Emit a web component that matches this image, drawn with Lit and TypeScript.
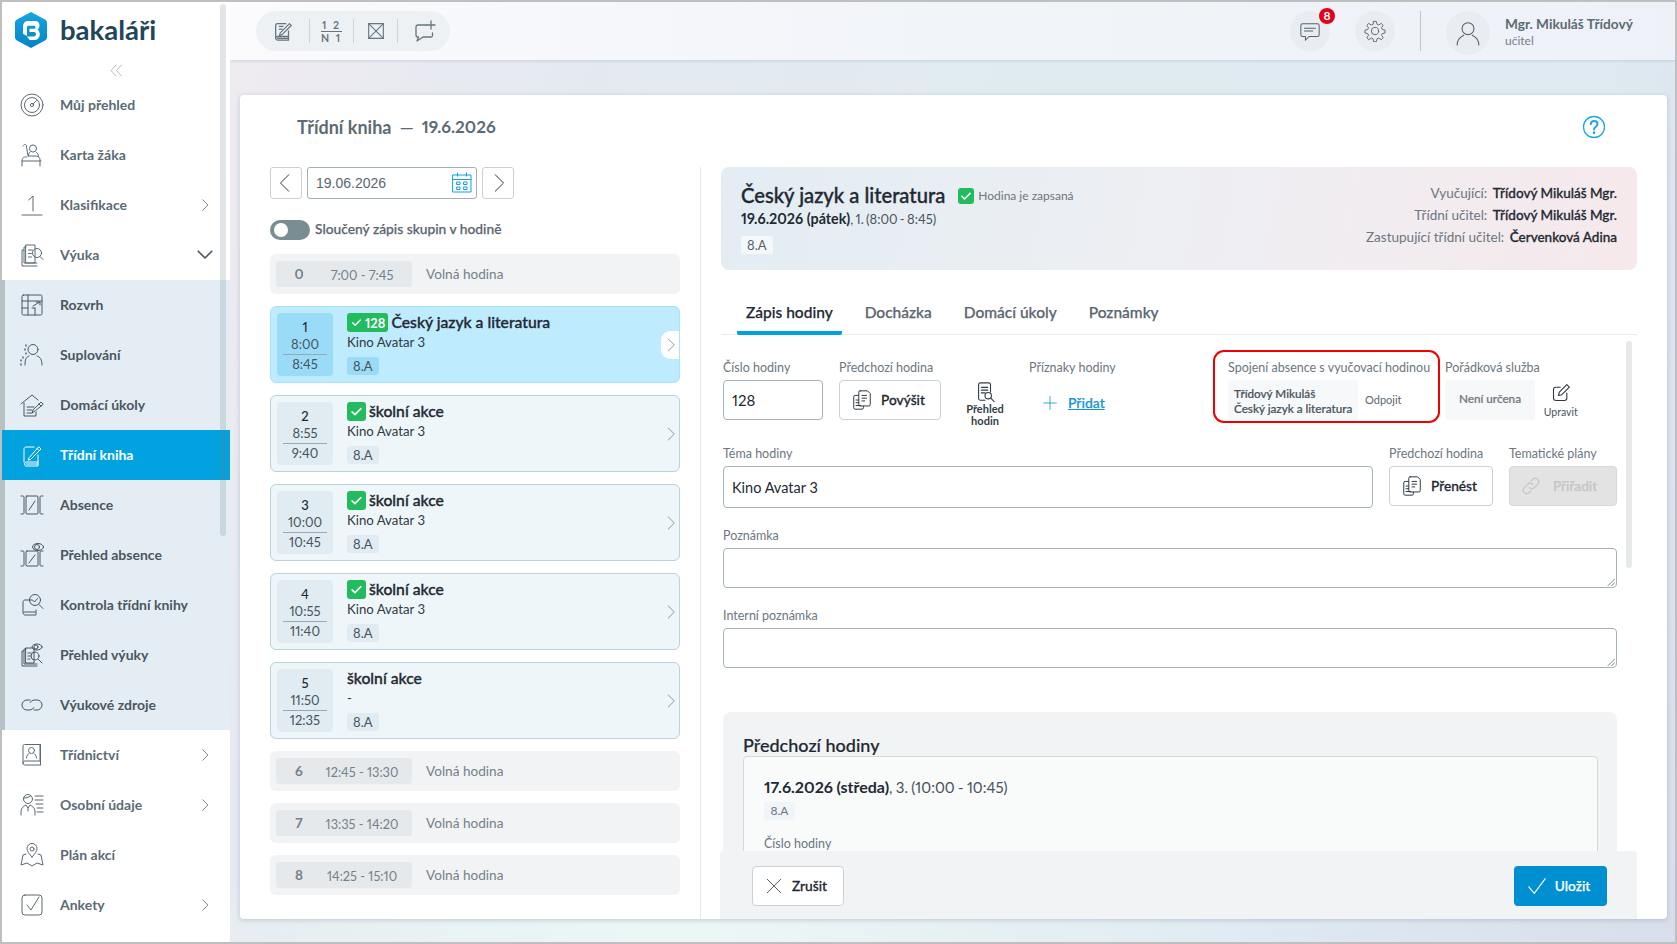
import { LitElement, html, css, svg, nothing } from 'lit';
import { customElement } from 'lit/decorators.js';

const icon = (size: number, body: unknown, sw = 1) => html`<svg
  width=${size} height=${size} viewBox="0 0 24 24" fill="none" stroke="currentColor"
  stroke-width=${sw} stroke-linecap="round" stroke-linejoin="round">${body}</svg>`;

const ICONS: Record<string, unknown> = {
  target: svg`<circle cx="12" cy="12" r="11"/><circle cx="12" cy="12" r="7.5"/><circle cx="12" cy="12" r="1.6"/><path d="M13 11l3.5-3.5"/>`,
  seat: svg`<circle cx="13" cy="5.5" r="3.6"/><path d="M3 3c1-2 3-2 3.4 0l1.6 10h8c3 0 4 2 4 4v6M7 14c-2-.6-5 0-5 4v5M2 18h19M9.500 9.500c-1 1-1 2-1 3.500M16.500 9.500c1.500 1 2 2.500 2 4"/>`,
  one: svg`<path d="M2 22h20M8.500 7l4.500-4v15"/>`,
  book: svg`<path d="M4 7h-2v16h15M6 4h-2v16h13"/><path d="M6 2h9v18H6zM8.500 7h4M8.500 10.500h3M8.500 14h3"/><circle cx="17" cy="10" r="4.500"/><path d="M20 13.500l3 3"/>`,
  grid: svg`<rect x="2" y="2" width="20" height="20" rx="1.500"/><path d="M2 8h20M8 2v20M2 15h6M15 15v7M15 15h-3M13 13l7-4M16 9h4v3"/>`,
  sub: svg`<circle cx="13" cy="6.500" r="5"/><path d="M9 13c-3 1-4 3-4 9M17 13c3 1 5 3 5 9" /><path d="M6 2v1M5 6v1M6 10v1M3 14v1M1 17v1M1 21v1" stroke-width="1.300"/>`,
  home: svg`<path d="M1 11L12 2l6 5M4 10v13h12v-4M7 14h7M7 17h5M7 20h5"/><path d="M15 18l-3 2 1-3 8-8 2 2zM19 11l2 2"/>`,
  bookpen: svg`<path d="M4 19V6c0-1 1-2 2-2h8M18 12v11H6c-2 0-2-4 0-4h12M6 21h12"/><path d="M9 15l-1 2 2.500-.5L21 6l-2-2zM17 5.500l2 2"/>`,
  absence: svg`<rect x="6" y="3" width="12" height="18" rx="1"/><path d="M9 17l6-9M1 3h2c1 0 1 1 1 2v14c0 1 0 2-1 2H1M23 3h-2c-1 0-1 1-1 2v14c0 1 0 2 1 2h2"/>`,
  absenceeye: svg`<rect x="6" y="8" width="12" height="15" rx="1"/><path d="M9 20l6-8M1 8h2c1 0 1 1 1 2v11c0 1 0 2-1 2H1M23 8h-2c-1 0-1 1-1 2v11c0 1 0 2 1 2h2"/><ellipse cx="18" cy="4" rx="5.500" ry="3.500"/><circle cx="17" cy="4" r="2.500"/>`,
  bookcheck: svg`<path d="M3 20V9c0-1 1-2 2-2h7M16 17v5H5c-2 0-2-3 0-3h10"/><circle cx="15" cy="7" r="5.500"/><path d="M12.500 7l2 2 3-3.500M19 11.500l4 4"/>`,
  bookeye: svg`<path d="M4 8h-2v15h15M6 6h-2v15h13"/><path d="M6 5h8v15H6zM8 10h3M8 13h3M8 16h2"/><circle cx="15" cy="13" r="4"/><path d="M18 16l4 4"/><ellipse cx="17" cy="4" rx="5" ry="3"/><circle cx="16" cy="4" r="2"/>`,
  link: svg`<path d="M10 7H7a5 5 0 0 0 0 10h3a5 5 0 0 0 4-2.500M14 17h3a5 5 0 0 0 0-10h-3a5 5 0 0 0-4 2.500"/>`,
  classbook: svg`<path d="M3 21V3c0-1 .5-1.500 1.500-1.500H20V18H5c-2.500 0-2.500 4 0 4h15M20.500 1.500V22"/><circle cx="11.500" cy="7.500" r="3"/><path d="M6.500 15c0-3 2-4 2.500-4.500M16.500 15c0-3-2-4-2.500-4.500"/>`,
  person: svg`<circle cx="8" cy="6" r="4.500"/><path d="M3.500 5c2 0 5-.5 7-2M1 22v-4c0-3 3-5 5-6l2 3 2-3c2 1 5 3 5 6v4M8 15v3M15 3h8M15 7h8M16 11h7M17 15h6M17 19h6"/>`,
  pin: svg`<path d="M12 14c-3-3-5-6-5-8.500a5 5 0 0 1 10 0C17 8 15 11 12 14z"/><circle cx="12" cy="6" r="2"/><path d="M6 11l-3 1-2 10 6-2 5 3 5-3 6 2-2-10-3-1"/>`,
  check: svg`<rect x="2" y="2" width="20" height="20" rx="3"/><path d="M7 12l4 5 8-13"/>`,
};

type NavItem = { label: string; ic: string; chevron?: 'right' | 'down'; active?: boolean };

const NAV_TOP: NavItem[] = [
  { label: 'Můj přehled', ic: 'target' },
  { label: 'Karta žáka', ic: 'seat' },
  { label: 'Klasifikace', ic: 'one', chevron: 'right' },
  { label: 'Výuka', ic: 'book', chevron: 'down' },
];
const NAV_SUB: NavItem[] = [
  { label: 'Rozvrh', ic: 'grid' },
  { label: 'Suplování', ic: 'sub' },
  { label: 'Domácí úkoly', ic: 'home' },
  { label: 'Třídní kniha', ic: 'bookpen', active: true },
  { label: 'Absence', ic: 'absence' },
  { label: 'Přehled absence', ic: 'absenceeye' },
  { label: 'Kontrola třídní knihy', ic: 'bookcheck' },
  { label: 'Přehled výuky', ic: 'bookeye' },
  { label: 'Výukové zdroje', ic: 'link' },
];
const NAV_BOTTOM: NavItem[] = [
  { label: 'Třídnictví', ic: 'classbook', chevron: 'right' },
  { label: 'Osobní údaje', ic: 'person', chevron: 'right' },
  { label: 'Plán akcí', ic: 'pin' },
  { label: 'Ankety', ic: 'check', chevron: 'right' },
];

type Row =
  | { free: true; n: number; time: string }
  | { free?: false; n: number; from: string; to: string; title: string; sub: string; done: boolean; badge?: string; selected?: boolean };

const ROWS: Row[] = [
  { free: true, n: 0, time: '7:00 - 7:45' },
  { n: 1, from: '8:00', to: '8:45', title: 'Český jazyk a literatura', sub: 'Kino Avatar 3', done: true, badge: '128', selected: true },
  { n: 2, from: '8:55', to: '9:40', title: 'školní akce', sub: 'Kino Avatar 3', done: true },
  { n: 3, from: '10:00', to: '10:45', title: 'školní akce', sub: 'Kino Avatar 3', done: true },
  { n: 4, from: '10:55', to: '11:40', title: 'školní akce', sub: 'Kino Avatar 3', done: true },
  { n: 5, from: '11:50', to: '12:35', title: 'školní akce', sub: '-', done: false },
  { free: true, n: 6, time: '12:45 - 13:30' },
  { free: true, n: 7, time: '13:35 - 14:20' },
  { free: true, n: 8, time: '14:25 - 15:10' },
];

const tick = svg`<path d="M5 12.500l4.500 4.500L19 7.500" stroke-width="2.600"/>`;
const chevronRight = svg`<path d="M8 3l9 9-9 9"/>`;
const copyIcon = icon(22, svg`<path d="M10 2h8l3 3v12c0 1-.5 1.500-1.500 1.500H10c-1 0-1.500-.5-1.500-1.500V3.500C8.500 2.500 9 2 10 2zM12 7h5M12 10h5M12 13h3"/><path d="M8 7H4.500C3.500 7 3 7.500 3 8.500v12C3 21.500 3.500 22 4.500 22H12c1 0 1.500-.5 1.500-1.500V19M5.500 12H8M5.500 15H8M5.500 18h5"/>`);

@customElement('app-root')
export class AppRoot extends LitElement {
  static styles = css`
    :host {
      display: block;
      width: 1677px;
      height: 944px;
      box-sizing: border-box;
      border: 2px solid #bfbfbf;
      overflow: hidden;
      font-family: 'Lato', 'Noto Sans', sans-serif;
      font-size: 14px;
      line-height: 18px;
      font-variant-numeric: proportional-nums;
      color: #1f2933;
      background:
        radial-gradient(ellipse 620px 90px at 40% 100%, #eef7f6 0, rgba(238, 247, 246, 0) 100%),
        linear-gradient(112deg, #f6edf1 0%, #e4e9f1 30%, #dfebf1 55%, #dfe9f2 80%, #d8deeb 100%);
    }
    * { box-sizing: border-box; }
    svg { display: block; flex: none; }
    .shell { display: flex; height: 100%; }

    .sidebar { position: relative; width: 228px; flex: none; background: #fff; color: #5b6b75; }
    .logo-row { display: flex; align-items: center; height: 54px; padding: 2px 0 0 13px; gap: 13px; }
    .logo-text { font-size: 27.500px; line-height: 36px; font-weight: 700; color: #1f4659; }
    .collapse { display: flex; justify-content: center; height: 24px; padding-top: 8px; color: #77858e; }
    .nav-row { display: flex; align-items: center; height: 50px; padding-left: 18px; font-weight: 700; font-size: 14px; }
    .nav-row .label { margin-left: 16px; flex: 1; }
    .nav-row .chev { margin-right: 18px; }
    .nav-row .chev.down { margin-right: 16px; color: #4a5963; }
    .nav-group { background: #e3edf3; box-shadow: inset 3px 0 #b2c3c9; color: #4b5660; }
    .nav-row.active { background: #00a2e0; color: #fff; position: relative; }
    .side-scroll { position: absolute; left: 218px; top: 2px; width: 6px; height: 532px; border-radius: 3px; background: rgba(110, 130, 140, .2); }

    .content { flex: 1; min-width: 0; display: flex; flex-direction: column; }
    .topbar {
      display: flex; align-items: center; height: 58px; flex: none; padding-left: 26px;
      background: linear-gradient(90deg, #fbfbfd, #f1f4f9 50%, #eef2f8);
      box-shadow: 0 1px 3px rgba(90, 110, 130, .2);
    }
    .pill { display: flex; align-items: center; height: 40px; padding: 8px 0; border-radius: 20px; background: #eef1f4; color: #66757f; }
    .pill-cell { display: flex; align-items: center; justify-content: center; height: 24px; width: 44px; border-left: 1px solid #cdd3d7; }
    .pill-cell:first-child { border-left: 0; width: 53px; }
    .pill-cell:last-child { width: 53px; }
    .frac { font-size: 10.500px; line-height: 10px; font-weight: 700; letter-spacing: 2px; text-align: center; }
    .frac div:first-child { border-bottom: 1px solid #66757f; padding-bottom: 1px; margin-bottom: 1px; }
    .spacer { flex: 1; }
    .round { position: relative; display: flex; align-items: center; justify-content: center; width: 40px; height: 40px; border-radius: 50%; background: #e9edf1; color: #55646e; margin-left: 25px; }
    .badge { position: absolute; right: -5px; top: -3px; width: 16px; height: 16px; border-radius: 50%; background: #e2001a; color: #fff; font-size: 12px; line-height: 16px; font-weight: 700; text-align: center; }
    .top-sep { width: 1px; height: 40px; background: #bcc6cc; margin-left: 25px; }
    .avatar { width: 44px; height: 44px; margin: 4px 0 0 25px; }
    .user { margin-left: 15px; width: 170px; color: #5b6b75; }
    .user-name { font-weight: 700; font-size: 13.700px; line-height: 18px; }
    .user-role { font-size: 12px; line-height: 14px; color: #748089; margin-top: 1px; }

    .card {
      flex: 1; min-height: 0; margin: 35px 8px 23px 10px; border-radius: 4px; background: #fff;
      box-shadow: 0 1px 5px rgba(90, 110, 140, .3); display: flex; flex-direction: column; overflow: hidden;
    }
    .card-head { display: flex; align-items: center; height: 72px; flex: none; padding: 0 61px 8px 57px; color: #5b6b75; font-size: 18px; font-weight: 700; gap: 6px; }
    .card-head .help { margin-left: auto; color: #1ea5e4; }
    .card-date { font-size: 17px; }
    .dash { font-weight: 400; padding: 0 2px; }
    .card-body { flex: 1; min-height: 0; display: flex; }

    .left { width: 460px; flex: none; padding: 0 20px 0 30px; }
    .date-row { display: flex; gap: 5px; height: 32px; }
    .icon-btn { display: flex; align-items: center; justify-content: center; width: 32px; border: 1px solid #c8d2d6; border-radius: 3px; color: #1f2933; }
    .date-input { display: flex; align-items: center; justify-content: space-between; width: 170px; padding: 0 2px 0 8px; border: 1px solid #9fb0b7; border-radius: 3px; font-family: 'Liberation Sans', sans-serif; font-size: 14px; color: #5a6670; }
    .date-input svg { color: #10a0dc; }
    .toggle-row { display: flex; align-items: center; gap: 5px; margin: 21px 0 14px; height: 20px; font-size: 13.800px; font-weight: 500; color: #5b6670; -webkit-text-stroke: .25px #5b6670; }
    .toggle-row span { margin-top: -2px; }
    .toggle { width: 40px; height: 20px; border-radius: 10px; background: #7a8d93; padding: 3px 0 0 4px; flex: none; }
    .toggle i { display: block; width: 14px; height: 14px; border-radius: 50%; background: #fff; }

    .list { display: flex; flex-direction: column; gap: 12px; }
    .free { display: flex; align-items: center; height: 40px; padding-left: 6px; border-radius: 6px; background: #f1f3f4; color: #75818a; font-size: 13.600px; }
    .free-badge { display: flex; align-items: center; width: 136px; height: 26px; border-radius: 3px; background: #e6e9eb; }
    .free-badge .n { width: 46px; text-align: center; font-weight: 700; }
    .free-badge .t { width: 80px; padding-top: 1px; text-align: center; white-space: nowrap; font-size: 12.800px; }
    .free .name { margin-left: 14px; }
    .lesson { position: relative; display: flex; height: 77px; padding: 6px; border: 1px solid #b8d2de; border-radius: 6px; background: #eff6fa; }
    .lesson.sel { border-color: #a5e2fb; background: #bfebff; }
    .time { width: 56px; height: 63px; flex: none; border-radius: 4px; background: #e0ecf2; text-align: center; color: #47535c; padding-top: 4px; font-size: 13px; }
    .sel .time { background: #9adcf8; }
    .time .num { color: #1f2933; height: 18px; line-height: 20px; font-weight: 500; }
    .time .div { height: 1px; width: 44px; margin: 0 auto; background: #9aa7ae; }
    .time .tx { height: 18px; line-height: 18px; }
    .time .tx:nth-child(2) { height: 19px; line-height: 19px; }
    .lesson-main { margin-left: 14px; flex: 1; min-width: 0; margin-top: -1px; }
    .lesson-title { display: flex; align-items: center; gap: 3px; height: 19px; font-size: 15.700px; font-weight: 500; color: #1f2933; -webkit-text-stroke: .35px #1f2933; }
    .ok { display: flex; align-items: center; justify-content: center; height: 19px; min-width: 19px; border-radius: 3px; background: #22bb5e; color: #fff; gap: 1px; padding: 0 2px; flex: none; margin-top: 2px; }
    .ok.wide { padding: 0 3px; gap: 2px; }
    .ok b { font-size: 13px; line-height: 16px; -webkit-text-stroke: 0; }
    .lesson-sub { height: 20px; line-height: 20px; margin-top: 1px; font-size: 13.200px; color: #2f3a42; }
    .chip { display: inline-block; height: 18px; line-height: 18px; padding: 0 6px; border-radius: 3px; background: #e0ecf2; font-size: 13px; color: #47535c; margin-top: 5px; }
    .sel .chip { background: #9adcf8; }
    .lesson .go { position: absolute; right: 0; top: 24px; width: 18px; height: 28px; display: flex; align-items: center; justify-content: flex-end; color: #5b6670; border-radius: 9px 0 0 9px; }
    .sel .go { background: #fff; }

    .right { position: relative; flex: 1; min-width: 0; border-left: 1px solid #e6e8ea; padding: 0 30px 0 20px; overflow: hidden; }
    .header {
      display: flex; justify-content: space-between; align-items: flex-start; height: 103px; padding: 15px 20px 0;
      border-radius: 8px; background: linear-gradient(100deg, #e3edf3, #eeeff3 50%, #f6e9ec);
    }
    .h-title-row { display: flex; align-items: center; height: 26px; }
    .h-title { font-size: 20.200px; font-weight: 500; -webkit-text-stroke: .35px #1f2933; color: #1f2933; }
    .h-ok { width: 16px; height: 16px; min-width: 16px; padding: 0; margin: 1px 4px 0 13px; }
    .h-state { font-size: 12px; color: #6c7680; margin-top: 1px; }
    .h-date { line-height: 20px; font-size: 13px; color: #47535c; margin-top: 1px; word-spacing: -1px; }
    .h-date b { color: #1f2933; font-size: 14.300px; word-spacing: 0; }
    .h-chip { display: inline-block; height: 18px; line-height: 18px; padding: 0 6px; margin-top: 7px; border-radius: 3px; background: #f5f8fa; font-size: 13px; color: #55616a; }
    .h-right { text-align: right; line-height: 22px; font-size: 13.500px; color: #6c7680; }
    .h-right b { font-weight: 500; color: #1f2933; -webkit-text-stroke: .3px #1f2933; margin-left: 2px; }

    .tabs { display: flex; gap: 14px; height: 45px; margin-top: 20px; padding-left: 16px; border-bottom: 1px solid #e8eaec; font-size: 15.500px; font-weight: 500; color: #5b6670; -webkit-text-stroke: .25px #5b6670; }
    .tab { padding: 13px 9px 0; height: 45px; line-height: 18px; }
    .tab.on { color: #1f2933; -webkit-text-stroke: .25px #1f2933; border-bottom: 4px solid #00a2e0; border-radius: 0 0 2px 2px; }

    .form { padding: 0 20px 0 2px; }
    .row1 { display: flex; align-items: flex-start; margin-top: 15px; }
    .field { padding-top: 9px; flex: none; }
    .lab { height: 18px; line-height: 18px; margin-bottom: 3px; font-size: 12.500px; color: #6c7680; white-space: nowrap; }
    .inp { display: flex; align-items: center; height: 40px; padding: 0 8px; border: 1px solid #a4b3b9; border-radius: 4px; font-size: 15px; color: #1f2933; background: #fff; }
    .btn { display: flex; align-items: center; justify-content: center; gap: 8px; height: 40px; padding-right: 4px; border: 1px solid #c8d2d6; border-radius: 4px; font-size: 13.700px; font-weight: 500; color: #1f2933; background: #fff; -webkit-text-stroke: .3px #1f2933; }
    .over { width: 60px; height: 65px; margin: 8px 14px 0 14px; display: flex; flex-direction: column; align-items: center; padding-top: 23px; font-size: 11px; line-height: 11.500px; font-weight: 700; text-align: center; color: #333d45; }
    .flags { width: 184px; }
    .add { display: flex; align-items: center; height: 40px; padding-left: 14px; gap: 11px; color: #1795d3; font-weight: 500; -webkit-text-stroke: .25px #1795d3; text-decoration: underline; font-size: 14px; }
    .add svg { margin-top: 6px; }
    .add span { margin-top: 6px; }
    .link-box { flex: none; width: 227px; height: 73px; padding: 7px 0 0 13px; border: 2px solid #f00000; border-radius: 11px; margin-right: 5px; }
    .soft { display: flex; flex-direction: column; justify-content: center; height: 40px; border-radius: 4px; background: #f6f8fa; font-size: 11.700px; line-height: 15px; color: #47535c; }
    .link-inner { display: flex; align-items: center; gap: 7px; font-size: 11px; color: #5b6670; }
    .link-inner .soft { width: 130px; padding: 1px 0 0 6px; font-weight: 500; -webkit-text-stroke: .2px #47535c; white-space: nowrap; }
    .duty .soft { width: 90px; align-items: center; padding-bottom: 3px; font-weight: 500; color: #6c7680; -webkit-text-stroke: .2px #6c7680; }
    .edit { flex: none; width: 42px; padding-top: 33px; display: flex; flex-direction: column; align-items: center; font-size: 10.500px; line-height: 14px; color: #47535c; gap: 2px; }
    .edit svg { color: #2f3a42; }
    .row2 { display: flex; gap: 16px; margin-top: 22px; }
    .row2 .inp { height: 42px; font-size: 14.500px; padding-top: 2px; }
    .disabled { background: #e3e3e3; color: #c3c5c6; border-color: #d4d8da; -webkit-text-stroke: .25px #c3c5c6; gap: 12px; padding-right: 8px; }
    .block { margin-top: 19px; }
    .area { position: relative; height: 40px; border: 1px solid #a4b3b9; border-radius: 4px; }
    .area svg { position: absolute; right: 1px; bottom: 1px; color: #5b6670; }
    .prev { margin-top: 44px; padding: 22px 19px 0 20px; height: 500px; border-radius: 8px; background: #f1f3f4; }
    .prev h3 { margin: 0; font-size: 18px; line-height: 22px; font-weight: 500; color: #1f2933; -webkit-text-stroke: .2px #1f2933; }
    .prev-in { height: 400px; padding: 20px 20px; border: 1px solid #d5d9dc; border-radius: 4px 4px 0 0; background: #f9fafa; }
    .prev-date { line-height: 20px; font-size: 15px; color: #47535c; word-spacing: -.500px; }
    .prev-date b { color: #1f2933; font-size: 16px; }
    .prev-chip { display: block; width: 31px; height: 18px; line-height: 18px; text-align: center; border-radius: 3px; background: #eff5f9; font-size: 12px; color: #6c7680; margin-top: 5px; }
    .prev-in .lab { margin-top: 15px; }
    .form-scroll { position: absolute; top: 174px; right: 35px; width: 6px; height: 227px; border-radius: 3px; background: #e6e8ea; }
    .footer { position: absolute; left: 19px; right: 30px; bottom: 0; height: 68px; padding: 15px 30px 0 32px; display: flex; justify-content: space-between; background: #f1f3f4; border-radius: 4px 4px 0 0; }
    .save { border: 0; background: #008fd1; color: #fff; -webkit-text-stroke: .25px #fff; width: 93px; gap: 7px; padding-right: 5px; }
    .cancel { width: 92px; gap: 9px; padding-right: 4px; }
  `;

  private navRow(i: NavItem) {
    const cls = `nav-row${i.active ? ' active' : ''}`;
    return html`<div class=${cls}>
      ${icon(24, ICONS[i.ic])}
      <span class="label">${i.label}</span>
      ${i.chevron === 'right' ? html`<span class="chev">${icon(14, chevronRight, 1.4)}</span>` : nothing}
      ${i.chevron === 'down' ? html`<span class="chev down">${icon(18, svg`<path d="M3 7l9 9 9-9"/>`, 2.2)}</span>` : nothing}
    </div>`;
  }

  private sidebar() {
    return html`<aside class="sidebar">
      <div class="logo-row">
        <svg width="32" height="36" viewBox="0 0 32 36">
          <defs><linearGradient id="lg" x1="0" y1="0" x2="0" y2="1"><stop offset="0" stop-color="#15a6e0"/><stop offset="1" stop-color="#0583c8"/></linearGradient></defs>
          <path d="M16 0l14 7.500c1 .6 2 1.500 2 3v15c0 1.500-1 2.400-2 3L16 36 2 28.500c-1-.6-2-1.500-2-3v-15c0-1.500 1-2.400 2-3z" fill="url(#lg)"/>
          <path d="M8 15c0-3 1.500-6 4.500-6H20c3 0 4.500 2 4.500 4.500 0 2-.8 3.300-2 4.300 1.500 1 2.300 2.500 2.300 4.500 0 3-2 5.700-5 5.700h-5.300l-2.500-3.500h7c1.300 0 2-1 2-2.200 0-1.300-.8-2.200-2-2.200h-4.500v-3.300H19c1 0 1.500-.8 1.500-1.600 0-.9-.6-1.500-1.500-1.500h-5.500c-1 0-1.500.6-1.500 1.700V24l-4-2.300z" fill="#fff"/>
        </svg>
        <span class="logo-text">bakaláři</span>
      </div>
      <div class="collapse">${icon(13, svg`<path d="M11 2L2 12l9 10M21 2l-9 10 9 10"/>`)}</div>
      ${NAV_TOP.map((i) => this.navRow(i))}
      <div class="nav-group">${NAV_SUB.map((i) => this.navRow(i))}</div>
      ${NAV_BOTTOM.map((i) => this.navRow(i))}
      <div class="side-scroll"></div>
    </aside>`;
  }

  private topbar() {
    return html`<header class="topbar">
      <div class="pill">
        <div class="pill-cell">${icon(22, svg`<path d="M4 20V6c0-1 1-2 2-2h9M18 12v10H6c-2.500 0-2.500-4 0-4h12M6 20h12"/><path d="M9 14l-1 3 3-1L21 6l-2-2z" stroke-width="1.300"/><path d="M8 7h4M8 10h3"/>`, 1.4)}</div>
        <div class="pill-cell"><div class="frac"><div>1 2</div><div>N 1</div></div></div>
        <div class="pill-cell">${icon(22, svg`<rect x="4" y="4" width="16" height="16"/><path d="M4 4l16 16M20 4L4 20"/>`, 1.2)}</div>
        <div class="pill-cell">${icon(24, svg`<path d="M15 6H6C4.500 6 4 6.500 4 8v8c0 1.500.5 2 2 2h.5L5 22l6-4h8c1 0 1.500-.5 1.500-1.500V14"/><path d="M19 2v8M15 6h8"/>`, 1.3)}</div>
      </div>
      <div class="spacer"></div>
      <div class="round">
        ${icon(22, svg`<path d="M4 4h16c1 0 2 1 2 2v10c0 1-1 2-2 2h-9l-4 4v-4H4c-1 0-2-1-2-2V6c0-1 1-2 2-2zM6 9h12M6 12h9"/>`, 1.1)}
        <span class="badge">8</span>
      </div>
      <div class="round">${icon(22, svg`<circle cx="12" cy="12" r="4"/><path d="M10.500 1.500h3l.7 3.200 1.800.8 2.800-1.800 2.100 2.100-1.800 2.800.8 1.800 3.100.7v3l-3.100.7-.8 1.800 1.800 2.800-2.100 2.100-2.800-1.800-1.800.8-.7 3.200h-3l-.7-3.200-1.800-.8-2.800 1.800-2.100-2.100 1.800-2.800-.8-1.800-3.100-.7v-3l3.100-.7.8-1.800-1.800-2.800 2.100-2.100 2.800 1.800 1.800-.8z"/>`)}</div>
      <div class="top-sep"></div>
      <div class="round avatar">${icon(26, svg`<circle cx="12" cy="8" r="5.500"/><path d="M2 23c0-6 4-8 6-9M22 23c0-6-4-8-6-9"/>`)}</div>
      <div class="user">
        <div class="user-name">Mgr. Mikuláš Třídový</div>
        <div class="user-role">učitel</div>
      </div>
    </header>`;
  }

  private lessonRow(r: Row) {
    if (r.free) {
      return html`<div class="free">
        <div class="free-badge"><span class="n">${r.n}</span><span class="t">${r.time}</span></div>
        <span class="name">Volná hodina</span>
      </div>`;
    }
    return html`<div class="lesson ${r.selected ? 'sel' : ''}">
      <div class="time">
        <div class="num">${r.n}</div>
        <div class="tx">${r.from}</div>
        <div class="div"></div>
        <div class="tx">${r.to}</div>
      </div>
      <div class="lesson-main">
        <div class="lesson-title">
          ${r.done ? html`<span class="ok ${r.badge ? 'wide' : ''}">${icon(r.badge ? 13 : 15, tick)}${r.badge ? html`<b>${r.badge}</b>` : nothing}</span>` : nothing}
          <span>${r.title}</span>
        </div>
        <div class="lesson-sub">${r.sub}</div>
        <span class="chip">8.A</span>
      </div>
      <div class="go">${icon(16, chevronRight)}</div>
    </div>`;
  }

  private leftColumn() {
    return html`<section class="left">
      <div class="date-row">
        <div class="icon-btn">${icon(22, svg`<path d="M15 3l-9 9 9 9"/>`)}</div>
        <div class="date-input">
          <span>19.06.2026</span>
          ${icon(24, svg`<rect x="3" y="4" width="18" height="17"/><path d="M3 8.500h18M7.500 2v3M16.500 2v3"/><rect x="7" y="11" width="3" height="2.500"/><rect x="14" y="11" width="3" height="2.500"/><rect x="7" y="16" width="3" height="2.500"/><rect x="14" y="16" width="3" height="2.500"/>`)}
        </div>
        <div class="icon-btn">${icon(22, svg`<path d="M9 3l9 9-9 9"/>`)}</div>
      </div>
      <div class="toggle-row"><div class="toggle"><i></i></div><span>Sloučený zápis skupin v hodině</span></div>
      <div class="list">${ROWS.map((r) => this.lessonRow(r))}</div>
    </section>`;
  }

  private rightColumn() {
    return html`<section class="right">
      <div class="header">
        <div>
          <div class="h-title-row">
            <span class="h-title">Český jazyk a literatura</span>
            <span class="ok h-ok">${icon(14, tick)}</span>
            <span class="h-state">Hodina je zapsaná</span>
          </div>
          <div class="h-date"><b>19.6.2026 (pátek)</b>, 1. (8:00 - 8:45)</div>
          <span class="h-chip">8.A</span>
        </div>
        <div class="h-right">
          <div>Vyučující: <b>Třídový Mikuláš Mgr.</b></div>
          <div>Třídní učitel: <b>Třídový Mikuláš Mgr.</b></div>
          <div>Zastupující třídní učitel: <b>Červenková Adina</b></div>
        </div>
      </div>
      <div class="tabs">
        <div class="tab on">Zápis hodiny</div>
        <div class="tab">Docházka</div>
        <div class="tab">Domácí úkoly</div>
        <div class="tab">Poznámky</div>
      </div>
      <div class="form">
        <div class="row1">
          <div class="field" style="width:116px">
            <div class="lab">Číslo hodiny</div>
            <div class="inp" style="width:100px">128</div>
          </div>
          <div class="field" style="width:102px">
            <div class="lab">Předchozí hodina</div>
            <div class="btn">${copyIcon}<span>Povýšit</span></div>
          </div>
          <div class="over">
            ${icon(22, svg`<path d="M7 2h9c1 0 2 1 2 2v8M12 21H7c-1 0-2-1-2-2V4c0-1 1-2 2-2M8 7h7M8 10h7M8 13h4"/><circle cx="15.500" cy="16" r="3.500"/><path d="M18 18.500l4 4"/>`, 1.2)}
            <span>Přehled<br />hodin</span>
          </div>
          <div class="field flags">
            <div class="lab">Příznaky hodiny</div>
            <div class="add">${icon(14, svg`<path d="M12 1v22M1 12h22"/>`, 1.4)}<span>Přidat</span></div>
          </div>
          <div class="link-box">
            <div class="lab">Spojení absence s vyučovací hodinou</div>
            <div class="link-inner">
              <div class="soft"><span>Třídový Mikuláš</span><span>Český jazyk a literatura</span></div>
              <span>Odpojit</span>
            </div>
          </div>
          <div class="field duty">
            <div class="lab">Pořádková služba</div>
            <div class="soft">Není určena</div>
          </div>
          <div class="edit">
            ${icon(20, svg`<path d="M11 5H6C4 5 3 6 3 8v10c0 2 1 3 3 3h10c2 0 3-1 3-3v-6"/><path d="M9 15l1-4L19 2l3 3-9 9z"/>`, 1.3)}
            <span>Upravit</span>
          </div>
        </div>
        <div class="row2">
          <div style="flex:1">
            <div class="lab">Téma hodiny</div>
            <div class="inp">Kino Avatar 3</div>
          </div>
          <div style="width:104px">
            <div class="lab">Předchozí hodina</div>
            <div class="btn">${copyIcon}<span>Přenést</span></div>
          </div>
          <div style="width:108px">
            <div class="lab">Tematické plány</div>
            <div class="btn disabled">${icon(20, svg`<path d="M10 14a4 4 0 0 0 6 0l4-4a4 4 0 0 0-6-6l-2 2M14 10a4 4 0 0 0-6 0l-4 4a4 4 0 0 0 6 6l2-2"/>`, 1.4)}<span>Přiřadit</span></div>
          </div>
        </div>
        ${['Poznámka', 'Interní poznámka'].map((l) => html`<div class="block">
          <div class="lab">${l}</div>
          <div class="area">${icon(8, svg`<path d="M23 3L3 23M23 14l-9 9"/>`, 2.4)}</div>
        </div>`)}
        <div class="prev">
          <h3>Předchozí hodiny</h3>
          <div class="prev-in">
            <div class="prev-date"><b>17.6.2026 (středa)</b>, 3. (10:00 - 10:45)</div>
            <span class="prev-chip">8.A</span>
            <div class="lab">Číslo hodiny</div>
          </div>
        </div>
      </div>
      <div class="form-scroll"></div>
      <div class="footer">
        <div class="btn cancel">${icon(18, svg`<path d="M3 3l18 18M21 3L3 21"/>`)}<span>Zrušit</span></div>
        <div class="btn save">${icon(22, svg`<path d="M3 13l6 7L21 4"/>`, 1.2)}<span>Uložit</span></div>
      </div>
    </section>`;
  }

  render() {
    return html`<div class="shell">
      ${this.sidebar()}
      <div class="content">
        ${this.topbar()}
        <main class="card">
          <div class="card-head">
            <span>Třídní kniha</span><span class="dash">—</span><span class="card-date">19.6.2026</span>
            <span class="help">${icon(24, svg`<circle cx="12" cy="12" r="10.500"/><path d="M8.800 9.200C9 7 10.500 6 12.200 6c2 0 3.300 1.200 3.300 3 0 2.800-3.500 2.800-3.500 5.500" stroke-width="2"/><path d="M12 17.500v.5" stroke-width="2.400"/>`, 1.3)}</span>
          </div>
          <div class="card-body">
            ${this.leftColumn()}
            ${this.rightColumn()}
          </div>
        </main>
      </div>
    </div>`;
  }
}
